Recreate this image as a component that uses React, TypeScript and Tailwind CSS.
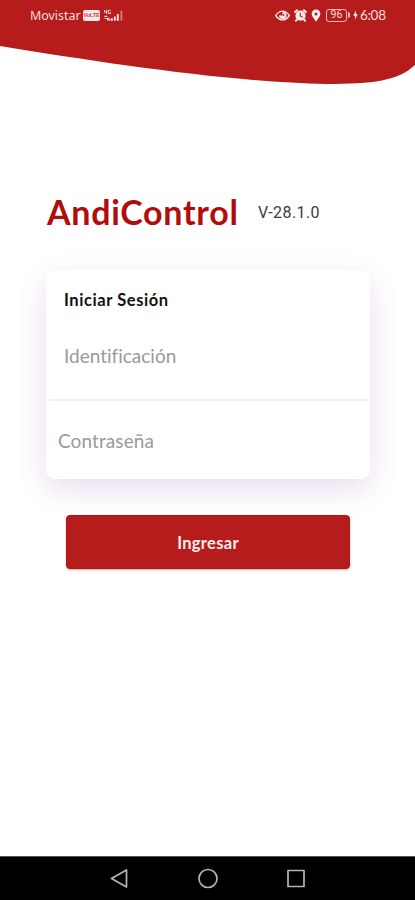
function EyeIcon() {
  return (
    <svg className="h-[11px] w-[15px]" viewBox="0 0 15 11" fill="none">
      <path d="M.7 5.5C3 2.2 5.3 1.1 7.7 1.1s4.6 1.3 6.6 4.4c-2 3.1-4.2 4.4-6.6 4.4S3 8.8.7 5.5Z" stroke="#fbe4e4" strokeWidth="1.4" />
      <path d="M7.8 1.6a3.7 3.7 0 1 1-3.7 3.7l3 .2Z" fill="#fbe4e4" />
      <circle cx="8.4" cy="5" r="1" fill="#b71c1c" />
    </svg>
  );
}

function AlarmIcon() {
  return (
    <svg className="h-[13px] w-[13px]" viewBox="0 0 13 13" fill="none">
      <circle cx="6.5" cy="6.7" r="5.1" fill="#fbe9e9" />
      <path d="M1.1 3 3 1.2M11.9 3 10 1.2M2.7 10.8l-.8 1M10.3 10.8l.8 1" stroke="#fbe9e9" strokeWidth="2" strokeLinecap="round" />
      <path d="M6.3 3.7v3.2l2.3 1.4" stroke="#b71c1c" strokeWidth="1.1" />
    </svg>
  );
}

function PinIcon() {
  return (
    <svg className="h-[13px] w-[10px]" viewBox="0 0 10 13">
      <path fillRule="evenodd" d="M5 .4A4.4 4.4 0 0 1 9.4 4.8C9.4 7.8 6.5 10 5 12.8 3.5 10 .6 7.8.6 4.8A4.4 4.4 0 0 1 5 .4Zm0 3a1.5 1.5 0 1 0 0 3 1.5 1.5 0 0 0 0-3Z" fill="#fff0f0" />
    </svg>
  );
}

function SignalIcon() {
  return (
    <svg className="h-[13px] w-[21px]" viewBox="0 0 21 13">
      <path d="M1.6 1v2.2h2M3.6.8v4M7.6 1.4H5.2v3h2.3V3.1" fill="none" stroke="#f6d2d2" strokeWidth="1" />
      <path d="M1.3 7.3h3.2M1.6 9.5h3v2M6 8.5v2.5h2" fill="none" stroke="#f6d2d2" strokeWidth="1.2" />
      <path d="M8 9.3h1.9v2.4H8zM10.9 7.5h1.9v4.2h-1.9zM13.8 5h2v6.7h-2z" fill="#f8dcdc" />
      <path d="M17.5 1.8h1.8v9.9h-1.8z" fill="#d98080" />
    </svg>
  );
}

function StatusBar() {
  return (
    <div className="relative flex h-[30px] items-center pl-[30px] text-[#f8dede]">
      <div className="flex w-[245px] items-center">
        <span className="w-[53px] whitespace-nowrap pt-[2px] font-['Noto_Sans',sans-serif] text-[12.5px] leading-none tracking-[-0.05px]">Movistar</span>
        <span className="flex h-[11px] w-[17px] items-center justify-center rounded-[2px] bg-[#fbe7e7] font-['Liberation_Sans',sans-serif] text-[6px] font-bold leading-none tracking-[-0.3px] text-[#c94b4b]">VoLTE</span>
        <span className="ml-[3px]"><SignalIcon /></span>
      </div>
      <EyeIcon />
      <span className="ml-[4px]"><AlarmIcon /></span>
      <span className="ml-[4px]"><PinIcon /></span>
      <span className="ml-[5px] flex h-[13px] w-[21px] items-center justify-center rounded-[3px] border border-[#efb9b9] font-['Roboto',sans-serif] text-[10.5px] leading-none">96</span>
      <span className="ml-px h-[6px] w-[2px] rounded-r-sm bg-[#efb9b9]" />
      <svg className="ml-[3px] h-[10px] w-[5px]" viewBox="0 0 5 10"><path d="M3 .3.2 5.7h1.9L1.8 9.7 4.8 4H2.9Z" fill="#fbe4e4" /></svg>
      <span className="ml-[2px] whitespace-nowrap pt-[2px] font-['Lato',sans-serif] text-[13.5px] leading-none tracking-[-0.3px]">6:08</span>
    </div>
  );
}

export default function App() {
  return (
    <main className="flex h-[900px] w-[415px] flex-col overflow-hidden bg-white font-['Lato',sans-serif] [font-variant-ligatures:none]">
      <header className="relative h-[90px] shrink-0">
        <svg className="absolute inset-0 h-full w-full" viewBox="0 0 415 90">
          <path d="M0 0H415V65C398 81 373 84 326 84C230 82 104 63 0 46Z" fill="#b71c1c" />
        </svg>
        <StatusBar />
      </header>

      <div className="mt-[97px] flex h-[50px] items-center pl-[47px]">
        <h1 className="w-[211px] whitespace-nowrap text-[34px] font-bold leading-none tracking-[0.7px] text-[#b00d0d]">AndiControl</h1>
        <span className="whitespace-nowrap pt-px font-['Roboto',sans-serif] text-[16px] leading-none tracking-[0.4px] text-[#3b3b3b]">V-28.1.0</span>
      </div>

      <section className="ml-[46px] mt-[33px] flex h-[209px] w-[324px] shrink-0 flex-col rounded-[9px] bg-white shadow-[0_10px_30px_#9a4fa833]">
        <div className="ml-1 mr-[2px] h-[131px] border-b-2 border-[#f0f0f0] pl-[14px]">
          <h2 className="w-fit whitespace-nowrap pt-[20px] text-[16.5px] font-bold leading-[20px] tracking-[0.57px] text-[#111]">Iniciar Sesión</h2>
          <p className="mt-[33px] w-fit whitespace-nowrap text-[19px] leading-[26px] text-[#9a9a9a]">Identificación</p>
        </div>
        <p className="ml-[12px] mt-[27px] w-fit whitespace-nowrap text-[19px] leading-[26px] tracking-[0.1px] text-[#9a9a9a]">Contraseña</p>
      </section>

      <button className="ml-[66px] mt-[36px] h-[54px] w-[284px] shrink-0 rounded-[4px] border border-[#b31313] bg-[#b71c1c] pt-[2px] text-[16.5px] font-bold leading-none tracking-[0.3px] text-[#ffeded] shadow-[0_1px_2px_#8c000055]">Ingresar</button>

      <nav className="mt-auto flex h-[44px] shrink-0 items-center border-t border-[#555] bg-black pl-[110px]">
        <svg className="h-[22px] w-[200px]" viewBox="0 0 200 22" fill="none" stroke="#b5b5b5" strokeWidth="1.7" strokeLinejoin="round">
          <path d="M16.5 2v17L1.5 10.5Z" />
          <circle cx="98" cy="10.5" r="9" />
          <rect x="178" y="2.5" width="16" height="16" />
        </svg>
      </nav>
    </main>
  );
}
